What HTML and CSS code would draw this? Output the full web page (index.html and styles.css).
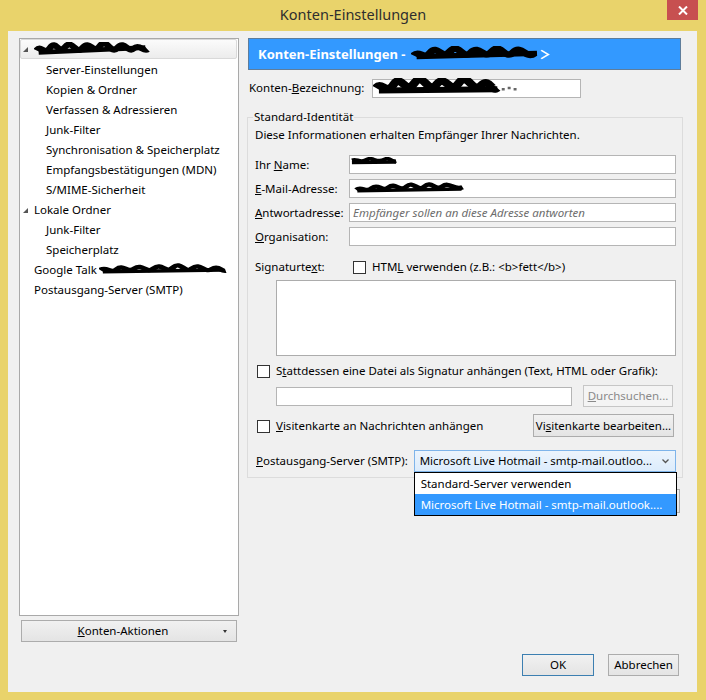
FILE: index.html
```html
<!DOCTYPE html>
<html lang="de">
<head>
<meta charset="utf-8">
<title>Konten-Einstellungen</title>
<link rel="stylesheet" href="styles.css">
</head>
<body>
<div class="window">
  <div class="titlebar">
    <div class="title">Konten-Einstellungen</div>
    <div class="close"><svg width="10" height="9" viewBox="0 0 10 9"><path d="M1 0.5 L9 8.5 M9 0.5 L1 8.5" stroke="#fff" stroke-width="2"/></svg></div>
  </div>
  <div class="client">
    <div class="main">
      <div class="sidebar">
        <div class="tree">
          <div class="row top selected">
            <span class="twisty"><svg width="5" height="5" viewBox="0 0 5 5"><path d="M5 0 L5 5 L0 5 Z" fill="#555"/></svg></span>
            <svg class="scribble s-tree" viewBox="0 0 100 16" preserveAspectRatio="none"><path d="M2 9 C6 2 9 15 14 6 S21 14 27 5 S36 15 42 6 S51 14 57 4 S66 15 72 6 S81 13 86 7 S94 11 98 8" fill="none" stroke="#000" stroke-width="6"/><path d="M4 11 L96 6" stroke="#000" stroke-width="5"/></svg>
          </div>
          <div class="row child">Server-Einstellungen</div>
          <div class="row child">Kopien &amp; Ordner</div>
          <div class="row child">Verfassen &amp; Adressieren</div>
          <div class="row child">Junk-Filter</div>
          <div class="row child">Synchronisation &amp; Speicherplatz</div>
          <div class="row child">Empfangsbestätigungen (MDN)</div>
          <div class="row child">S/MIME-Sicherheit</div>
          <div class="row top">
            <span class="twisty"><svg width="5" height="5" viewBox="0 0 5 5"><path d="M5 0 L5 5 L0 5 Z" fill="#555"/></svg></span>
            <span>Lokale Ordner</span>
          </div>
          <div class="row child">Junk-Filter</div>
          <div class="row child">Speicherplatz</div>
          <div class="row leaf">Google Talk <svg class="scribble s-talk" viewBox="0 0 100 16" preserveAspectRatio="none"><path d="M1 8 C6 3 9 13 14 7 S22 12 28 6 S37 13 43 6 S52 13 58 5 S67 13 73 6 S82 12 88 7 S95 10 99 9" fill="none" stroke="#000" stroke-width="5"/><path d="M3 10 L97 8" stroke="#000" stroke-width="4"/></svg></div>
          <div class="row leaf">Postausgang-Server (SMTP)</div>
        </div>
        <button class="btn actions"><span class="actions-label"><u>K</u>onten-Aktionen</span><span class="caret"></span></button>
      </div>

      <div class="pane">
        <div class="header">
          <span>Konten-Einstellungen - </span>
          <svg class="scribble s-head" viewBox="0 0 100 16" preserveAspectRatio="none"><path d="M2 9 C6 3 9 14 14 6 S22 14 28 5 S37 14 43 6 S52 14 58 5 S67 14 73 6 S82 13 88 7" fill="none" stroke="#000" stroke-width="6"/><path d="M4 10 L90 7" stroke="#000" stroke-width="5"/><path d="M93 4 L98 8 L93 12" fill="none" stroke="#fff" stroke-width="1.5"/></svg>
        </div>

        <div class="namerow">
          <label class="namelabel">Konten-<u>B</u>ezeichnung:</label>
          <div class="input nameinput"><svg class="scribble s-name" viewBox="0 0 100 16" preserveAspectRatio="none"><path d="M2 8 C6 2 9 14 14 5 S22 14 28 4 S37 14 43 5 S52 14 58 4 S67 13 73 6 S80 12 84 8" fill="none" stroke="#000" stroke-width="6"/><path d="M4 10 L84 9" stroke="#000" stroke-width="5"/><path d="M87 9 L89 9 M91 8 L93 8 M95 9 L97 9" stroke="#666" stroke-width="2"/></svg></div>
        </div>

        <fieldset class="group">
          <legend>Standard-Identität</legend>
          <p class="intro">Diese Informationen erhalten Empfänger Ihrer Nachrichten.</p>
          <div class="fields">
            <label>Ihr <u>N</u>ame:</label>
            <div class="input"><svg class="scribble s-ihr" viewBox="0 0 100 16" preserveAspectRatio="none"><path d="M4 6 C14 2 22 12 34 5 S56 12 70 5 S86 11 96 7" fill="none" stroke="#000" stroke-width="7"/><path d="M4 10 L96 9" stroke="#000" stroke-width="6"/></svg></div>
            <label><u>E</u>-Mail-Adresse:</label>
            <div class="input"><svg class="scribble s-mail" viewBox="0 0 100 16" preserveAspectRatio="none"><path d="M2 9 C7 4 10 13 16 7 S25 12 31 6 S41 12 47 5 S57 12 63 5 S73 11 79 5 S89 10 97 6" fill="none" stroke="#000" stroke-width="5"/><path d="M3 10 L96 8" stroke="#000" stroke-width="4"/></svg></div>
            <label><u>A</u>ntwortadresse:</label>
            <div class="input placeholder">Empfänger sollen an diese Adresse antworten</div>
            <label><u>O</u>rganisation:</label>
            <div class="input"></div>
          </div>

          <div class="sigrow">
            <label class="siglabel">Signaturte<u>x</u>t:</label>
            <span class="check"></span>
            <span class="checktext">HTM<u>L</u> verwenden (z.B.: &lt;b&gt;fett&lt;/b&gt;)</span>
          </div>
          <div class="textarea"></div>

          <div class="checkrow">
            <span class="check"></span>
            <span class="checktext">S<u>t</u>attdessen eine Datei als Signatur anhängen (Text, HTML oder Grafik):</span>
          </div>
          <div class="filerow">
            <div class="input fileinput"></div>
            <button class="btn disabled browse" disabled><u>D</u>urchsuchen...</button>
          </div>

          <div class="vcardrow">
            <div class="vcardcheck">
              <span class="check"></span>
              <span class="checktext"><u>V</u>isitenkarte an Nachrichten anhängen</span>
            </div>
            <button class="btn vcardbtn">Vi<u>s</u>itenkarte bearbeiten...</button>
          </div>

          <div class="smtprow">
            <label class="smtplabel"><u>P</u>ostausgang-Server (SMTP):</label>
            <div class="selectwrap">
              <div class="select">
                <span>Microsoft Live Hotmail - smtp-mail.outloo...</span>
                <svg class="chev" width="7" height="5" viewBox="0 0 7 5"><path d="M0.5 0.5 L3.5 3.5 L6.5 0.5" fill="none" stroke="#555" stroke-width="1.3"/></svg>
              </div>
              <div class="dropdown">
                <div class="opt">Standard-Server verwenden</div>
                <div class="opt active">Microsoft Live Hotmail - smtp-mail.outlook....</div>
              </div>
            </div>
          </div>
        </fieldset>

        <div class="underrow">
          <button class="btn covered"></button>
        </div>
      </div>
    </div>

    <div class="footer">
      <button class="btn okbtn">OK</button>
      <button class="btn cancelbtn">Abbrechen</button>
    </div>
  </div>
</div>
</body>
</html>
```
FILE: styles.css
```css
* { box-sizing: border-box; }

html, body {
  margin: 0;
  padding: 0;
}

body {
  width: 706px;
  height: 700px;
  overflow: hidden;
  background: #e9d36b;
  font-family: "Noto Sans", "Open Sans", sans-serif;
  font-size: 11.5px;
  line-height: 16px;
  color: #000;
}

u { text-decoration: underline; text-underline-offset: 1px; }

.window {
  display: flex;
  flex-direction: column;
  height: 700px;
}

/* title bar */
.titlebar {
  height: 31px;
  display: flex;
  align-items: flex-start;
}
.title {
  flex: 1;
  text-align: center;
  margin-top: 6px;
  padding-left: 8px;
  font-size: 14.5px;
  line-height: 17px;
  color: #2e2e2e;
}
.close {
  margin-left: -31px;
  margin-right: 8px;
  width: 31px;
  height: 20px;
  background: #c75050;
  display: flex;
  align-items: center;
  justify-content: center;
}

/* client area */
.client {
  margin: 0 9px 0 8px;
  height: 661px;
  background: #f0f0f0;
  padding: 7px 14px 16px 11px;
  display: flex;
  flex-direction: column;
}
.main {
  display: flex;
  gap: 9px;
  height: 604px;
}

/* sidebar tree */
.sidebar {
  width: 220px;
  display: flex;
  flex-direction: column;
}
.tree {
  height: 578px;
  background: #fff;
  border: 1px solid #a9a9a9;
}
.row {
  height: 20px;
  display: flex;
  align-items: center;
  white-space: nowrap;
  padding-top: 1px;
}
.row.child { padding-left: 26px; }
.row.leaf { padding-left: 14px; }
.twisty {
  width: 14px;
  height: 20px;
  display: flex;
  align-items: center;
  padding-left: 3px;
  padding-top: 1px;
}
.row.selected {
  border: 1px solid #d9d9d9;
  border-radius: 2px;
  background: linear-gradient(#fbfbfb, #ececec);
  margin-right: 1px;
  padding-top: 0;
}
.row.selected .twisty { width: 13px; padding-left: 2px; }

.scribble { display: block; flex: none; }
.s-tree { width: 116px; height: 15px; }
.s-talk { width: 128px; height: 14px; margin-left: 2px; }
.s-head { width: 140px; height: 17px; margin-left: 2px; }
.s-name { width: 148px; height: 20px; margin-top: -1px; }
.s-ihr { width: 48px; height: 9px; margin-top: -6px; margin-left: -3px; }
.s-mail { width: 112px; height: 14px; margin-left: 1px; }

/* generic button */
.btn {
  font: inherit;
  color: #000;
  height: 22px;
  padding: 0;
  border: 1px solid #acacac;
  background: linear-gradient(#f1f1f1, #e4e4e4);
  display: flex;
  align-items: center;
  justify-content: center;
  cursor: default;
}
.btn.disabled {
  color: #8a8a8a;
  border-color: #c6c6c6;
  background: #f4f4f4;
}

.actions {
  margin: 4px 2px 0 2px;
  width: 216px;
  justify-content: flex-start;
}
.actions-label {
  width: 202px;
  text-align: center;
}
.caret {
  width: 0;
  height: 0;
  border-left: 2px solid transparent;
  border-right: 2px solid transparent;
  border-top: 3px solid #333;
  margin-left: -1px;
}

/* right pane */
.pane {
  width: 435px;
  display: flex;
  flex-direction: column;
}
.header {
  width: 433px;
  height: 32px;
  background: #3399ff;
  border: 1px solid #5f7d9b;
  color: #fff;
  font-weight: bold;
  font-size: 13px;
  display: flex;
  align-items: center;
  padding-left: 9px;
  white-space: pre;
}

.namerow {
  margin-top: 8px;
  display: flex;
  align-items: center;
  height: 20px;
}
.namelabel {
  width: 124px;
  padding-left: 1px;
}
.input {
  height: 19px;
  background: #fff;
  border: 1px solid #b5b5b5;
  display: flex;
  align-items: center;
  padding-left: 3px;
  white-space: nowrap;
  overflow: visible;
}
.nameinput {
  width: 209px;
  height: 19px;
  padding-left: 0;
}

.group {
  margin: 11px 0 0 -1px;
  width: 436px;
  min-width: 0;
  border: 1px solid #dcdcdc;
  padding: 0 6px 5px 7px;
}
.group legend {
  padding: 0 1px;
  margin-left: -2px;
  line-height: 16px;
}
.intro {
  margin: 2px 0 0 0;
}

.fields {
  margin-top: 12px;
  display: grid;
  grid-template-columns: 94px 327px;
  grid-auto-rows: 19px;
  row-gap: 5px;
  align-items: center;
}
.placeholder {
  color: #6d6d6d;
  font-style: italic;
}

.sigrow {
  margin-top: 13px;
  height: 16px;
  display: flex;
  align-items: center;
}
.siglabel { width: 98px; }
.check {
  width: 13px;
  height: 13px;
  border: 1px solid #333;
  background: #fff;
  flex: none;
}
.checktext { margin-left: 6px; white-space: nowrap; }

.textarea {
  margin: 5px 0 0 21px;
  width: 400px;
  height: 76px;
  background: #fff;
  border: 1px solid #acacac;
}

.checkrow {
  margin-top: 7px;
  height: 16px;
  display: flex;
  align-items: center;
  padding-left: 2px;
}

.filerow {
  margin-top: 6px;
  display: flex;
  align-items: center;
  height: 22px;
}
.fileinput {
  margin-left: 21px;
  width: 296px;
}
.browse {
  margin-left: 11px;
  width: 90px;
}

.vcardrow {
  margin-top: 7px;
  height: 23px;
  display: flex;
  align-items: center;
  justify-content: space-between;
  padding-left: 2px;
  padding-right: 2px;
}
.vcardcheck {
  display: flex;
  align-items: center;
  margin-top: 1px;
}
.vcardbtn {
  width: 141px;
  height: 23px;
}

.smtprow {
  margin-top: 13px;
  height: 22px;
  display: flex;
  align-items: center;
}
.smtplabel {
  width: 159px;
  padding-left: 1px;
}
.selectwrap {
  position: relative;
  width: 263px;
  height: 22px;
}
.select {
  height: 22px;
  border: 1px solid #7eb4ea;
  background: linear-gradient(#ecf4fc, #dcecfc);
  display: flex;
  align-items: center;
  justify-content: space-between;
  padding: 0 6px 0 5px;
  white-space: nowrap;
}
.dropdown {
  position: absolute;
  top: 100%;
  left: 0;
  width: 263px;
  border: 1px solid #000;
  background: #fff;
  z-index: 5;
}
.opt {
  height: 21px;
  display: flex;
  align-items: center;
  padding-left: 6px;
  white-space: nowrap;
}
.opt.active {
  background: #3399ff;
  color: #fff;
}

.underrow {
  margin-top: 11px;
  display: flex;
  justify-content: flex-end;
  padding-right: 3px;
}
.covered {
  width: 200px;
  height: 24px;
}

/* footer */
.footer {
  margin-top: 12px;
  display: flex;
  justify-content: flex-end;
  gap: 14px;
  padding-right: 4px;
}
.okbtn {
  width: 72px;
  border-color: #3c7fb1;
}
.cancelbtn {
  width: 71px;
}
```
